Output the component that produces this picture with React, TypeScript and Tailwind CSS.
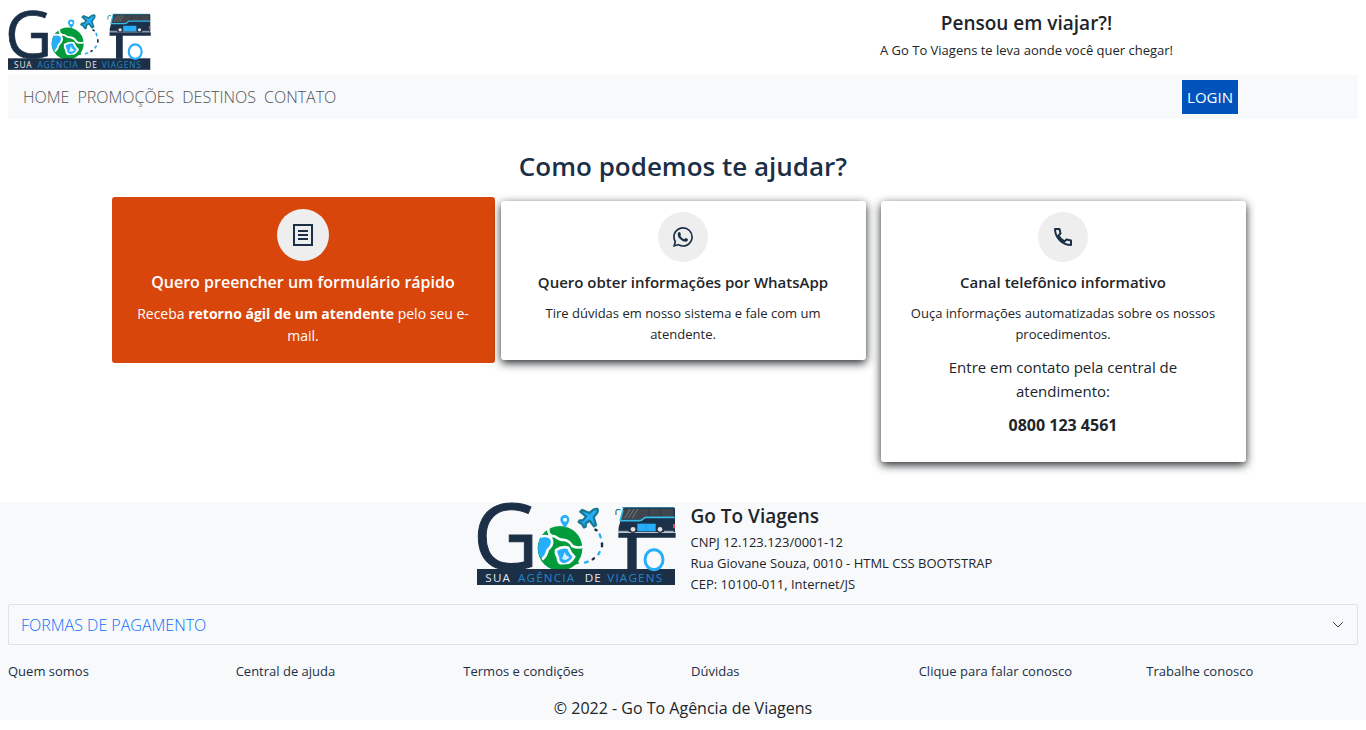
import type { ReactNode } from "react";

const NAV_LINKS = ["HOME", "PROMOÇÕES", "DESTINOS", "CONTATO"];

const FOOTER_LINKS = [
  "Quem somos",
  "Central de ajuda",
  "Termos e condições",
  "Dúvidas",
  "Clique para falar conosco",
  "Trabalhe conosco",
];

function Logo({ className }: { className: string }) {
  return (
    <svg
      viewBox="21 21 597 249"
      className={className}
      overflow="visible"
      role="img"
      aria-label="Go To - Sua agência de viagens"
      fontFamily="'Open Sans', 'Noto Sans', sans-serif"
    >
      <text x="8" y="221" fontSize="272" fill="#1b2f47" stroke="#1b2f47" strokeWidth="3">G</text>

      {/* Globe */}
      <circle cx="270" cy="160" r="67" fill="#009b3a" />
      <path d="M212 126 Q203 145 204 165 Q206 184 217 193 Q229 181 232 166 Q248 155 247 142 Q246 134 240 130 Q228 121 212 126Z" fill="#27aefb" />
      <path
        d="M211 125 Q239 118 246 136 Q249 151 233 165 Q230 181 217 194 M235 101 Q233 124 256 125 Q268 135 284 135 Q299 138 307 153 Q322 161 338 155"
        fill="none" stroke="#f8fafc" strokeWidth="8"
      />
      <path d="M258 165 Q276 153 295 158 Q300 174 313 185 Q301 206 281 209 Q262 204 264 188 Q256 176 258 165Z" fill="#27aefb" stroke="#f8fafc" strokeWidth="8" strokeLinejoin="round" />
      <path d="M284 171 L288 181 L299 187 L288 195 L276 192Z" fill="#d7f0ff" />
      <path d="M258 218 Q265 212 274 212 Q300 213 326 202" fill="none" stroke="#009b3a" strokeWidth="7" />

      {/* Pin */}
      <path fillRule="evenodd" d="M285 60 A13 13 0 0 1 298 74 Q297 83 285 99 Q272 83 271 74 A13 13 0 0 1 285 60Z M285 68 A6 6 0 1 0 285 80 A6 6 0 1 0 285 68Z" fill="#27aefb" />

      {/* Flight path */}
      <g fill="none" strokeWidth="7" strokeLinecap="round">
        <path d="M376 104 L380 106" stroke="#1b2f47" />
        <path d="M389 118 L392 127" stroke="#27aefb" />
        <path d="M396 145 L396 154" stroke="#1b2f47" />
        <path d="M389 171 L385 178" stroke="#27aefb" />
        <path d="M372 190 L368 193" stroke="#1b2f47" />
        <path d="M353 200 L345 203" stroke="#27aefb" />
      </g>

      {/* Plane */}
      <path
        d="M382 42 Q374 40 365 48 L358 54 L337 45 L331 50 L348 64 L339 76 L329 76 L326 81 L336 87 L342 97 L347 95 L348 84 L359 77 L372 94 L378 90 L371 67 L378 58 Q386 48 382 42Z"
        fill="#27aefb" stroke="#177a91" strokeWidth="7" strokeLinejoin="round"
      />

      {/* Bus */}
      <path d="M466 37 H611 Q615 37 615 42 V111 H446 Q444 99 449 86 L458 45 Q460 37 466 37Z" fill="#1b3049" />
      <path d="M468 42 H611 V65 H524 L515 73 H454 L461 46 Q462 42 468 42Z" fill="#41454d" />
      <path d="M481 42 L464 69 M493 42 L475 69 M504 42 L487 69" stroke="#777b80" strokeWidth="3" />
      <path d="M537 42 V65 M572 42 V65" stroke="#25303f" strokeWidth="2" />
      <path d="M614 67 H528 Q522 68 518 73 Q515 77 508 77 H452 M459 44 L450 78" fill="none" stroke="#35bce6" strokeWidth="5" />
      <path d="M452 44 H441 Q437 45 438 60" fill="none" stroke="#2b86a3" strokeWidth="4" />
      <path d="M456 38 H612" fill="none" stroke="#2b86a3" strokeWidth="3" />
      <path d="M502 86 H557 V109 H502Z" fill="#27aefb" />
      <path d="M528 86 V109" stroke="#178bcb" strokeWidth="2" />
      <path d="M446 109 H476 M582 109 H611" stroke="#b9c6cf" strokeWidth="3" />
      <circle cx="489" cy="103" r="11" fill="#28323d" />
      <circle cx="489" cy="103" r="7" fill="#dfe3e6" />
      <circle cx="570" cy="103" r="11" fill="#28323d" />
      <circle cx="570" cy="103" r="7" fill="#dfe3e6" />
      <path d="M609 87 H615 V100 H609Z" fill="#e14b55" />

      {/* Letter T post and ring */}
      <path d="M445 113 H617 V128 H500 V224 H472 V128 H445Z" fill="#1b2f47" />
      <rect x="21" y="222" width="594" height="48" fill="#1b2f47" />
      <ellipse cx="552" cy="194" rx="27" ry="30" fill="none" stroke="#27aefb" strokeWidth="9" />

      <g fontSize="35" className="tracking-widest">
        <text x="46" y="262" fill="#e5e8ec">SUA</text>
        <text x="144" y="262" fill="#2187c8">AGÊNCIA</text>
        <text x="344" y="262" fill="#e5e8ec">DE</text>
        <text x="412" y="262" fill="#2187c8">VIAGENS</text>
      </g>
    </svg>
  );
}

function FormIcon() {
  return (
    <svg viewBox="0 0 20 22" className="h-[22px] w-5" fill="none" stroke="#1b2f47" strokeWidth="2" aria-hidden="true">
      <path d="M1 1 H19 V21 H1Z M5 7 H15 M5 11 H15 M5 15 H15" />
    </svg>
  );
}

function WhatsIcon() {
  return (
    <svg viewBox="0 0 16 16" className="size-5" fill="#1b2f47" aria-hidden="true">
      <path d="M13.601 2.326A7.854 7.854 0 0 0 7.994 0C3.627 0 .068 3.558.064 7.926c0 1.399.366 2.76 1.057 3.965L0 16l4.204-1.102a7.933 7.933 0 0 0 3.79.965h.004c4.368 0 7.926-3.558 7.93-7.93A7.898 7.898 0 0 0 13.6 2.326zM7.994 14.521a6.573 6.573 0 0 1-3.356-.92l-.24-.144-2.494.654.666-2.433-.156-.251a6.56 6.56 0 0 1-1.007-3.505c0-3.626 2.957-6.584 6.591-6.584a6.56 6.56 0 0 1 4.66 1.931 6.557 6.557 0 0 1 1.928 4.66c-.004 3.639-2.961 6.592-6.592 6.592z" />
      <path d="M4 4.7 Q4.8 3.6 5.6 4.2 L6.4 5.9 Q6.4 6.3 5.8 7 Q6.9 9 8.9 9.8 L9.8 8.9 Q10.1 8.7 11.9 9.6 Q12.3 11.6 9.8 11.8 Q7.5 11.7 5.4 9.4 Q3.2 7 4 4.7Z" />
    </svg>
  );
}

function PhoneIcon() {
  return (
    <svg viewBox="0 0 18 18" className="size-[18px]" fill="none" stroke="#1b2f47" strokeWidth="2" strokeLinejoin="round" aria-hidden="true">
      <path d="M1 1 H5.5 L6.5 5.5 L4.5 7.5 Q6.5 11.5 10.5 13.5 L12.5 11.5 L17 12.5 V17 Q10.5 17 5.8 12.2 Q1 7.5 1 1Z" />
    </svg>
  );
}

function HelpCard({ icon, title, text, children }: { icon: ReactNode; title: string; text: string; children?: ReactNode }) {
  return (
    <article className="rounded-[3px] bg-white px-6 pt-[11px] pb-[15px] shadow-[0_3px_10px_#212529]">
      <div className="mx-auto flex size-[50px] items-center justify-center rounded-full bg-[#eee]">{icon}</div>
      <h2 className="mt-[11px] text-[15px] leading-[18px] font-semibold">{title}</h2>
      <p className="mt-3 text-[13px] leading-[21px]">{text}</p>
      {children}
    </article>
  );
}

export default function App() {
  return (
    <div className="font-['Open_Sans','Noto_Sans',sans-serif] text-[#212529]">
      <header className="px-2">
        <div className="-mr-2 flex h-[75px] items-start justify-between pt-2.5">
          <a href="#"><Logo className="h-[60px] w-[143px]" /></a>
          <div className="w-1/2 pt-px text-center">
            <h5 className="text-[19px] leading-6 font-semibold">Pensou em viajar?!</h5>
            <p className="mt-[5px] text-[13px] leading-[21px]">A Go To Viagens te leva aonde você quer chegar!</p>
          </div>
        </div>
        <nav className="flex h-11 items-center bg-[#f8f9fb] pr-[120px] pl-[15px]">
          <ul className="flex gap-2 text-[16px]">
            {NAV_LINKS.map((label) => (
              <li key={label}><a href="#" className="font-light text-[#505459]">{label}</a></li>
            ))}
          </ul>
          <button type="button" className="ml-auto h-[34px] bg-[#0053ba] px-[5px] text-[15px] text-white">LOGIN</button>
        </nav>
      </header>

      <main className="mt-[30px] px-5 pb-10 text-center">
        <h1 className="text-[26px] leading-[34px] font-semibold text-[#1b2f47]">Como podemos te ajudar?</h1>
        <section className="mx-auto mt-[18px] grid max-w-[1125px] grid-cols-3 items-start gap-[15px]">
          <article className="-mx-[9px] -my-1 rounded-[3px] bg-[#d9460b] px-6 pt-3 pb-4 text-white">
            <div className="mx-auto flex size-[52px] items-center justify-center rounded-full bg-[#eee]"><FormIcon /></div>
            <h2 className="mt-3 text-[16px] leading-[18px] font-semibold">Quero preencher um formulário rápido</h2>
            <p className="mt-3 text-[14px] leading-[22px]">
              Receba <strong>retorno ágil de um atendente</strong> pelo seu e-<br />mail.
            </p>
          </article>
          <HelpCard
            icon={<WhatsIcon />}
            title="Quero obter informações por WhatsApp"
            text="Tire dúvidas em nosso sistema e fale com um atendente."
          />
          <HelpCard
            icon={<PhoneIcon />}
            title="Canal telefônico informativo"
            text="Ouça informações automatizadas sobre os nossos procedimentos."
          >
            <p className="mx-auto mt-2.5 max-w-[260px] text-[15px] leading-6">Entre em contato pela central de atendimento:</p>
            <p className="mt-2.5 mb-2.5 text-[16px] leading-6 font-bold">0800 123 4561</p>
          </HelpCard>
        </section>
      </main>

      <footer className="bg-[#f8f9fb]">
        <div className="grid h-[102px] grid-cols-2 gap-[15px]">
          <Logo className="h-[83px] w-[199px] justify-self-end" />
          <div className="pt-0.5">
            <h5 className="text-[19px] leading-6 font-semibold">Go To Viagens</h5>
            <address className="mt-1 text-[13px] leading-[21px] not-italic">
              CNPJ 12.123.123/0001-12<br />
              Rua Giovane Souza, 0010 - HTML CSS BOOTSTRAP<br />
              CEP: 10100-011, Internet/JS
            </address>
          </div>
        </div>
        <div className="px-2">
          <button type="button" className="flex h-[41px] w-full items-center justify-between rounded-[2px] border border-[#dee2e6] px-3 text-[16px] font-light text-[#0d6efd]">
            FORMAS DE PAGAMENTO
            <svg viewBox="0 0 14 14" className="size-3.5" fill="none" stroke="#343a40" strokeLinecap="round" aria-hidden="true">
              <path d="M2.5 4.5 L7 9 L11.5 4.5" />
            </svg>
          </button>
        </div>
        <ul className="mt-4 grid grid-cols-6 text-[13px] leading-[21px]">
          {FOOTER_LINKS.map((label) => (
            <li key={label} className="pl-2"><a href="#" className="text-[#1b2f47]">{label}</a></li>
          ))}
        </ul>
        <p className="mt-3.5 text-center text-[16px] leading-6">© 2022 - Go To Agência de Viagens</p>
      </footer>
    </div>
  );
}
